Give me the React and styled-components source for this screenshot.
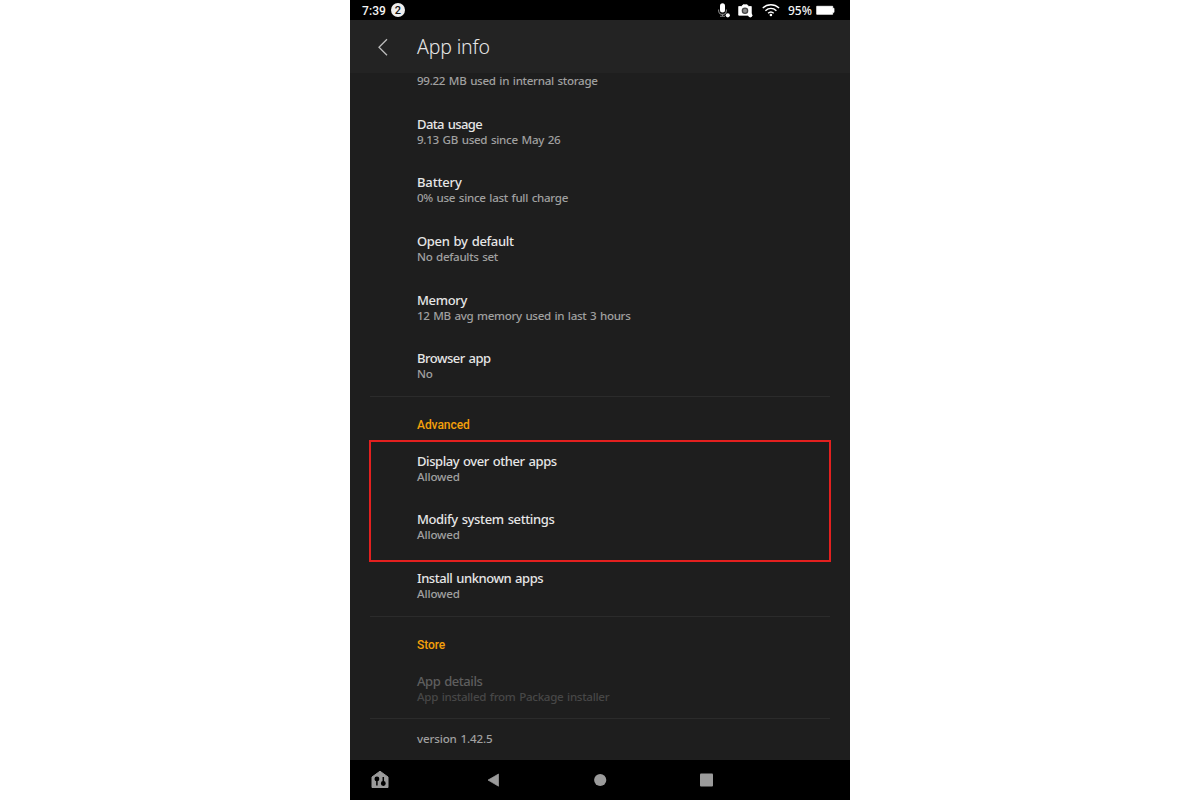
import React from "react";
import styled, { createGlobalStyle } from "styled-components";

const Global = createGlobalStyle`
  body { margin: 0; background: #fff; font-family: "Noto Sans", "Open Sans", sans-serif; }
  * { box-sizing: border-box; }
`;
const Page = styled.div`
  height: 800px;
  display: flex;
  justify-content: center;
`;
const Device = styled.main`
  width: 500px;
  height: 800px;
  display: flex;
  flex-direction: column;
  background: #1e1e1e;
  overflow: hidden;
`;
const StatusBar = styled.div`
  height: 20px;
  flex: none;
  background: #000;
  color: #f4f4f4;
  display: flex;
  align-items: center;
  justify-content: space-between;
  padding: 0 15px 0 12px;
`;
const StatusGroup = styled.div`
  display: flex;
  align-items: center;
  height: 20px;
`;
const Clock = styled.span`
  font: 500 12px/20px Roboto, sans-serif;
  letter-spacing: 0.1px;
  width: 29px;
  padding-top: 1px;
  white-space: nowrap;
`;
const Count = styled.span`
  width: 14px;
  height: 14px;
  border-radius: 50%;
  background: #eee;
  color: #111;
  font: 500 11px/15px Roboto, sans-serif;
  text-align: center;
`;
const Percent = styled.span`
  font-size: 12px;
  line-height: 20px;
  font-weight: 500;
  padding-top: 1px;
  width: 28px;
  white-space: nowrap;
`;
const Header = styled.header`
  height: 53px;
  flex: none;
  background: #232323;
  display: flex;
  align-items: center;
  padding-left: 26px;
`;
const Heading = styled.h1`
  margin: 0 0 0 27px;
  font-size: 19.5px;
  line-height: 26px;
  font-weight: 300;
  letter-spacing: -0.15px;
  color: #e6e6e6;
`;
const Content = styled.div`
  height: 687px;
  flex: none;
  padding: 0 20px;
`;
const Sub = styled.div`
  padding-left: 47px;
  font-size: 11.6px;
  line-height: 16px;
  font-weight: 500;
  letter-spacing: ${(p) => p.$ls || 0}px;
  word-spacing: 1px;
  color: ${(p) => (p.$dim ? "#474747" : "#a0a0a0")};
  white-space: nowrap;
`;
const Title = styled(Sub)`
  font-size: 13px;
  color: ${(p) => (p.$dim ? "#5e5e5e" : "#e6e6e6")};
`;
const RowBox = styled.div`
  height: 58.7px;
  padding-top: ${(p) => (p.$dim ? 13.8 : 13.2)}px;
`;
const Top = styled.div`
  height: 29.5px;
`;
const Section = styled.h2`
  margin: 0;
  height: 43.5px;
  padding: 20.1px 0 0 47px;
  border-top: 1px solid #2b2b2b;
  font: 500 12px/16px Roboto, sans-serif;
  letter-spacing: -0.05px;
  color: #f5a00a;
`;
const Marked = styled.div`
  position: relative;
  &::after {
    content: "";
    position: absolute;
    inset: 0.5px -1px -4.7px;
    border: 2px solid #e3201f;
  }
`;
const Version = styled.div`
  border-top: 1px solid #2b2b2b;
  padding-top: 11.9px;
`;
const NavBar = styled.nav`
  height: 40px;
  flex: none;
  background: #000;
  display: flex;
  align-items: center;
  padding-left: 20px;
`;

function Row({ title, sub, tls, sls, dim }) {
  return (
    <RowBox $dim={dim}>
      <Title $ls={tls} $dim={dim}>{title}</Title>
      <Sub $ls={sls} $dim={dim}>{sub}</Sub>
    </RowBox>
  );
}

const usage = [
  { title: "Data usage", tls: -0.6, sub: "9.13 GB used since May 26", sls: -0.3 },
  { title: "Battery", tls: -0.15, sub: "0% use since last full charge", sls: -0.32 },
  { title: "Open by default", tls: -0.33, sub: "No defaults set", sls: -0.33 },
  { title: "Memory", tls: -0.33, sub: "12 MB avg memory used in last 3 hours", sls: -0.34 },
  { title: "Browser app", tls: -0.5, sub: "No", sls: -0.3 },
];

function StatusIcons() {
  return (
    <svg width="72" height="20" viewBox="0 0 72 20">
      <rect x="4" y="3.300" width="5" height="9.200" rx="2.500" fill="#fff" />
      <path d="M2.600 9.500v1a3.900 3.900 0 0 0 7.800 0v-1M6.500 14v2.500M4 16.300h5" fill="none" stroke="#858585" strokeWidth="1.100" />
      <circle cx="11.800" cy="15.300" r="2.100" fill="#fff" />
      <path d="M22.700 6.500h2.800l1.500-1.700h4.200l1.500 1.700h2.600v8.700H22.700z" fill="#fff" strokeLinejoin="round" stroke="#fff" strokeWidth=".8" />
      <circle cx="29" cy="10.800" r="3.300" fill="#444" />
      <circle cx="29" cy="10.800" r="2" fill="#888" />
      <circle cx="34.300" cy="15.300" r="2.100" fill="#fff" />
      <g fill="none" stroke="#fff" strokeWidth="1.400">
        <path d="M46.700 8c4.900-4.300 11.500-4.300 16.400 0M49.400 10.700c3.300-3 7.700-3 11 0M52.100 13.300c1.700-1.600 3.900-1.600 5.600 0" />
      </g>
      <circle cx="54.900" cy="15" r="1.300" fill="#fff" />
    </svg>
  );
}

export default function App() {
  return (
    <Page>
      <Global />
      <Device>
        <StatusBar>
          <StatusGroup>
            <Clock>7:39</Clock>
            <Count>2</Count>
          </StatusGroup>
          <StatusGroup>
            <StatusIcons />
            <Percent>95%</Percent>
            <svg width="19" height="20" viewBox="0 0 19 20">
              <path d="M.7 6.300h16v2H18v4h-1.300v2H.7z" fill="#fff" stroke="#fff" strokeLinejoin="round" strokeWidth=".8" />
            </svg>
          </StatusGroup>
        </StatusBar>
        <Header>
          <svg width="14" height="20" viewBox="0 0 14 20">
            <path d="M11 2.200 3 10.200l8 8" fill="none" stroke="#bdbdbd" strokeWidth="1.300" />
          </svg>
          <Heading>App info</Heading>
        </Header>
        <Content>
          <Top>
            <Sub $ls={-0.31}>99.22 MB used in internal storage</Sub>
          </Top>
          {usage.map((r) => <Row key={r.title} {...r} />)}
          <Section>Advanced</Section>
          <Marked>
            <Row title="Display over other apps" tls={-0.44} sub="Allowed" sls={-0.15} />
            <Row title="Modify system settings" tls={-0.38} sub="Allowed" sls={-0.15} />
          </Marked>
          <Row title="Install unknown apps" tls={-0.45} sub="Allowed" sls={-0.15} />
          <Section>Store</Section>
          <Row title="App details" tls={-0.45} sub="App installed from Package installer" sls={-0.31} dim />
          <Version>
            <Sub $ls={-0.15}>version 1.42.5</Sub>
          </Version>
        </Content>
        <NavBar>
          <svg width="480" height="40" viewBox="0 0 480 40" fill="#9b9b9b">
            <path d="M10 11.200 18 17v10.500H2V17z" stroke="#9b9b9b" strokeLinejoin="round" />
            <g fill="#000" stroke="#000" strokeWidth="1.500">
              <circle cx="6.900" cy="18.900" r="1.700" />
              <path d="M6.900 19v6.500M13.300 17v6" />
              <circle cx="13.300" cy="23.500" r="1.700" />
            </g>
            <path d="M118 20.100 128.500 14v12.200z" stroke="#9b9b9b" strokeLinejoin="round" strokeWidth=".7" />
            <circle cx="230.200" cy="20" r="6.100" />
            <rect x="330" y="13.600" width="13" height="13" rx="1" />
          </svg>
        </NavBar>
      </Device>
    </Page>
  );
}
